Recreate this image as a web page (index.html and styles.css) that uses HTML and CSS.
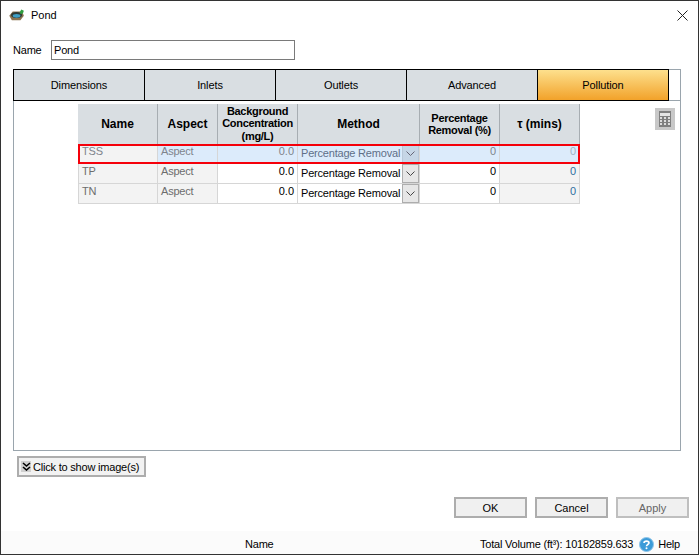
FILE: index.html
```html
<!DOCTYPE html>
<html lang="en">
<head>
<meta charset="utf-8">
<title>Pond</title>
<link rel="stylesheet" href="styles.css">
</head>
<body>
<div class="window">
  <header class="titlebar">
    <svg class="app-icon" width="16" height="12" viewBox="0 0 18 14">
      <path d="M0 8 L4 3 H15 L17 8 L13 13 H3 Z" fill="#8a7350"/>
      <ellipse cx="8.500" cy="7" rx="6.500" ry="3.600" fill="#2f3a36"/>
      <ellipse cx="8.500" cy="8" rx="4.500" ry="2.200" fill="#3f9fc4"/>
      <path d="M12 4 L14 0.500 L17 2 L16 5 L13.500 6 Z" fill="#2f9e3f"/>
    </svg>
    <span class="title">Pond</span>
    <svg class="close" width="11" height="11" viewBox="0 0 11 11"><path d="M0.500 0.500 L10.500 10.500 M10.500 0.500 L0.500 10.500" stroke="#222" stroke-width="1" fill="none"/></svg>
  </header>
  <div class="name-row">
    <label class="name-label">Name</label>
    <div class="name-input">Pond</div>
  </div>
  <section class="panel">
    <nav class="tabs">
      <div class="tab">Dimensions</div>
      <div class="tab">Inlets</div>
      <div class="tab">Outlets</div>
      <div class="tab">Advanced</div>
      <div class="tab tab-active">Pollution</div>
    </nav>
    <div class="panel-body">
      <div class="grid-wrap">
        <div class="grid">
          <div class="hd">Name</div>
          <div class="hd">Aspect</div>
          <div class="hd hd-tight">Background<br>Concentration<br>(mg/L)</div>
          <div class="hd">Method</div>
          <div class="hd hd-tight hd-two">Percentage<br>Removal (%)</div>
          <div class="hd">τ (mins)</div>

          <div class="c c-name sel-dim">TSS</div>
          <div class="c c-aspect sel sel-dim">Aspect</div>
          <div class="c c-num sel sel-dim">0.0</div>
          <div class="c c-method sel"><span>Percentage Removal</span><i class="drop drop-sel"><svg width="9" height="5" viewBox="0 0 9 5"><path d="M0.500 0.500 L4.500 4.500 L8.500 0.500" fill="none" stroke="#667"/></svg></i></div>
          <div class="c c-num sel sel-dim">0</div>
          <div class="c c-num sel sel-blue">0</div>

          <div class="c c-name">TP</div>
          <div class="c c-aspect">Aspect</div>
          <div class="c c-num">0.0</div>
          <div class="c c-method"><span>Percentage Removal</span><i class="drop"><svg width="9" height="5" viewBox="0 0 9 5"><path d="M0.500 0.500 L4.500 4.500 L8.500 0.500" fill="none" stroke="#444"/></svg></i></div>
          <div class="c c-num">0</div>
          <div class="c c-num c-ro">0</div>

          <div class="c c-name">TN</div>
          <div class="c c-aspect">Aspect</div>
          <div class="c c-num">0.0</div>
          <div class="c c-method"><span>Percentage Removal</span><i class="drop"><svg width="9" height="5" viewBox="0 0 9 5"><path d="M0.500 0.500 L4.500 4.500 L8.500 0.500" fill="none" stroke="#444"/></svg></i></div>
          <div class="c c-num">0</div>
          <div class="c c-num c-ro">0</div>
        </div>
        <div class="sel-outline"></div>
      </div>
      <div class="calc">
        <svg width="12" height="16" viewBox="0 0 12 16">
          <rect width="12" height="16" fill="#7f7f7f"/>
          <rect x="1" y="2" width="10" height="3" fill="#e4e4e4"/>
          <path d="M1 6h2v2H1zM5 6h2v2H5zM9 6h2v2H9zM1 9h2v2H1zM5 9h2v2H5zM9 9h2v2H9zM1 12h2v2H1zM5 12h2v2H5zM9 12h2v2H9z" fill="#dcdcdc"/>
        </svg>
      </div>
    </div>
  </section>
  <div class="images-row">
    <button class="img-btn">
      <span class="chev"><svg width="9" height="9" viewBox="0 0 9 9"><path d="M1 1 L4.500 4 L8 1 M1 5 L4.500 8 L8 5" fill="none" stroke="#000" stroke-width="1.600"/></svg></span>
      Click to show image(s)
    </button>
  </div>
  <div class="actions">
    <button class="btn">OK</button>
    <button class="btn">Cancel</button>
    <button class="btn btn-off">Apply</button>
  </div>
  <footer class="status">
    <span class="status-name">Name</span>
    <span class="status-vol">Total Volume (ft³): 10182859.633</span>
    <svg class="help-icon" width="15" height="15" viewBox="0 0 15 15">
      <circle cx="7.500" cy="7.500" r="7" fill="#3b9bd8" stroke="#8fc4e8"/>
      <path d="M5 6 C5 3.500 10 3.500 10 6 C10 7.500 7.500 7.500 7.500 9.200" fill="none" stroke="#fff" stroke-width="1.600"/>
      <circle cx="7.500" cy="11.300" r="1" fill="#fff"/>
    </svg>
    <span class="help">Help</span>
  </footer>
</div>
</body>
</html>
```
FILE: styles.css
```css
* { box-sizing: border-box; }
html, body { margin: 0; padding: 0; }
body {
  width: 699px;
  height: 555px;
  font-family: "Liberation Sans", Arial, sans-serif;
  font-size: 11px;
  letter-spacing: -0.2px;
  color: #000;
  background: #fff;
}
.window {
  width: 699px;
  height: 555px;
  border: 1px solid #333;
  display: flex;
  flex-direction: column;
  background: #fff;
  overflow: hidden;
}
.titlebar {
  height: 29px;
  flex: none;
  display: flex;
  align-items: center;
  padding: 0 10px 1px 8px;
}
.app-icon { flex: none; }
.title { margin-left: 6px; letter-spacing: 0; }
.close { margin-left: auto; }
.name-row {
  flex: none;
  display: flex;
  align-items: center;
  height: 20px;
  margin-top: 10px;
  padding-left: 12px;
}
.name-label { width: 38px; }
.name-input {
  width: 244px;
  height: 20px;
  border: 1px solid #7a7a7a;
  padding: 2px 0 0 2px;
  line-height: 15px;
}
.panel {
  flex: none;
  width: 668px;
  height: 382px;
  margin: 9px 0 0 12px;
  border: 1px solid #9aa5ad;
  display: flex;
  flex-direction: column;
  position: relative;
}
.tabs {
  flex: none;
  display: flex;
  height: 32px;
  margin: -1px 0 0 -1px;
  border-bottom: 1px solid #9aa5ad;
}
.tab {
  width: 131px;
  height: 32px;
  background: #d9dee2;
  border: 1px solid #000;
  border-right-width: 0;
  display: flex;
  align-items: center;
  justify-content: center;
  letter-spacing: -0.1px;
}
.tab-active {
  width: 132px;
  border-right-width: 1px;
  background: linear-gradient(#fde08d, #f2a22a);
}
.panel-body {
  flex: 1;
  position: relative;
  display: flex;
  align-items: flex-start;
  padding: 3px 0 0 64px;
}
.grid-wrap { position: relative; flex: none; }
.grid {
  display: grid;
  grid-template-columns: 80px 60px 80px 122px 80px 80px;
  grid-template-rows: 40px 20px 20px 20px;
  background: #fff;
}
.hd {
  background: #d9dee2;
  border-right: 1px solid #a7adb2;
  display: flex;
  align-items: center;
  justify-content: center;
  text-align: center;
  font-weight: bold;
  font-size: 12px;
  letter-spacing: 0;
}
.hd-tight { font-size: 11px; line-height: 12.500px; letter-spacing: -0.3px; padding-bottom: 1px; }
.hd-two { line-height: 12px; }
.c {
  border-right: 1px solid #d6d6d6;
  border-bottom: 1px solid #d6d6d6;
  padding: 0 4px 0 3px;
  line-height: 15px;
  white-space: nowrap;
  overflow: hidden;
}
.c-name, .c-aspect { background: #f3f3f3; color: #6d6d6d; }
.c-name { border-left: 1px solid #d6d6d6; }
.c-num { text-align: right; padding-right: 3px; letter-spacing: 0; }
.c-ro { background: #f3f3f3; color: #2f6f9f; }
.c-method {
  display: flex;
  align-items: stretch;
  padding: 0 0 0 3px;
  line-height: 18px;
}
.c-method span { flex: 1; min-width: 0; }
.drop {
  flex: none;
  width: 17px;
  background: #e6e6e6;
  border: 1px solid #adadad;
  display: flex;
  align-items: center;
  justify-content: center;
}
.drop-sel { background: #c6d6e6; border-color: #b8c8d8; }
.sel { background: #dcebfb; }
.sel-dim { color: #7f848c; }
.sel-blue { color: #9fb2c4; }
.c-method.sel { color: #5f6f88; }
.sel-outline {
  position: absolute;
  left: 0;
  top: 40px;
  width: 502px;
  height: 20px;
  border: 2px solid #f5000a;
  pointer-events: none;
}
.calc {
  position: absolute;
  right: 5px;
  top: 7px;
  width: 20px;
  height: 22px;
  background: #c8c8c8;
  display: flex;
  align-items: center;
  justify-content: center;
}
.images-row {
  flex: none;
  height: 21px;
  margin-top: 5px;
  padding-left: 16px;
}
.img-btn {
  width: 129px;
  height: 21px;
  padding: 0 0 0 2px;
  background: #f2f2f2;
  border: 2px solid #adadad;
  font: 11px "Liberation Sans", Arial, sans-serif;
  letter-spacing: -0.2px;
  color: #000;
  display: flex;
  align-items: center;
  gap: 2px;
  white-space: nowrap;
}
.chev {
  width: 10px;
  height: 11px;
  background: #d0d0d0;
  display: flex;
  align-items: center;
  justify-content: center;
}
.actions {
  flex: none;
  display: flex;
  justify-content: flex-end;
  gap: 8px;
  margin-top: 20px;
  padding-right: 9px;
  height: 21px;
}
.btn {
  width: 73px;
  height: 21px;
  background: #f0f0f0;
  border: 2px solid #adadad;
  font: 11px "Liberation Sans", Arial, sans-serif;
  color: #000;
  padding: 0;
}
.btn-off { color: #666; border-color: #bfbfbf; }
.status {
  flex: 1;
  margin-top: 13px;
  background: #fbfbfb;
  display: flex;
  align-items: center;
  white-space: nowrap;
  padding: 3px 0 0 244px;
}
.status-name { width: 235px; }
.help-icon { margin-left: 6px; flex: none; }
.help { margin-left: 4px; }
```
